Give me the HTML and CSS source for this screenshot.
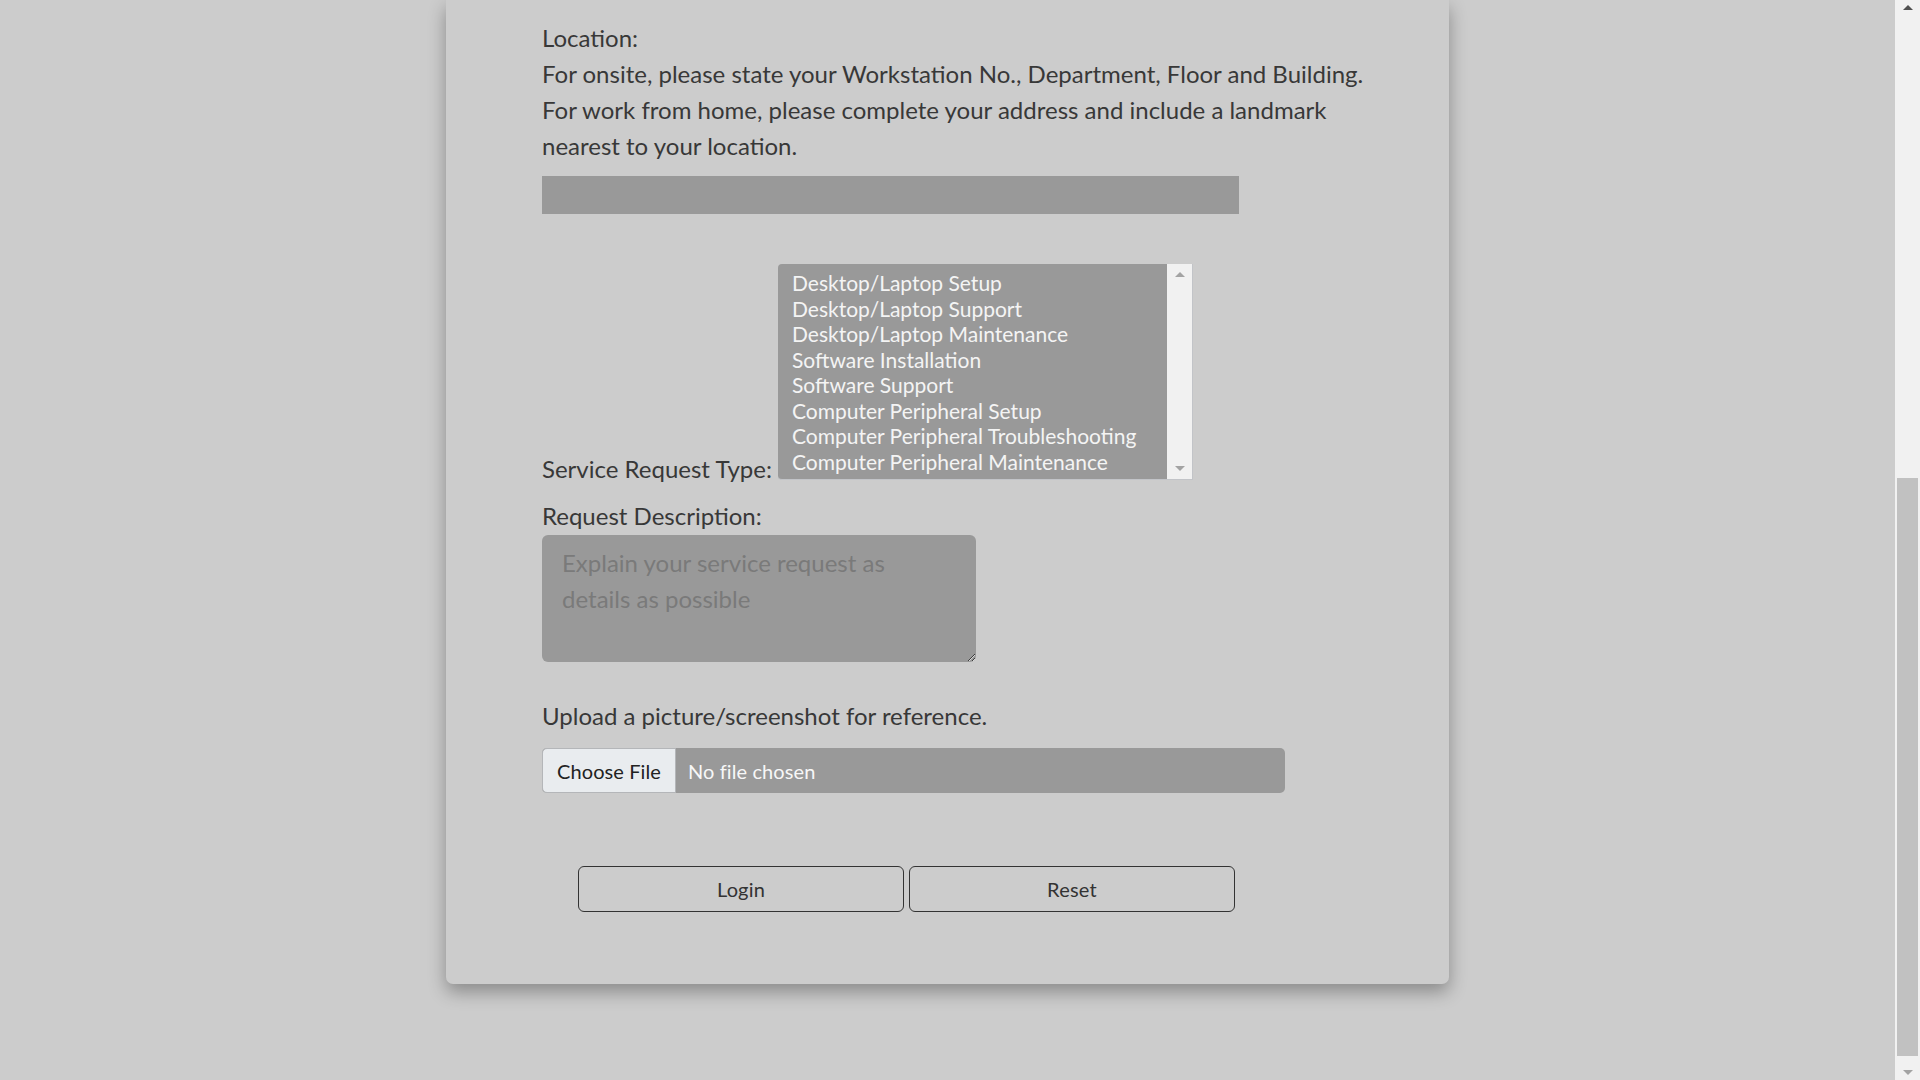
FILE: index.html
```html
<!DOCTYPE html>
<html lang="en">
<head>
<meta charset="utf-8">
<title>Service Request</title>
<link rel="stylesheet" href="styles.css">
</head>
<body>
<div class="screen">
  <main class="stage">
    <form class="card">
      <div class="loc-text">
        <div>Location:</div>
        <div>For onsite, please state your Workstation No., Department, Floor and Building.</div>
        <div>For work from home, please complete your address and include a landmark nearest to your location.</div>
      </div>
      <input class="loc-input" type="text">

      <div class="type-row">
        <span class="type-label">Service Request Type:</span>
        <div class="listbox">
          <div class="options">
            <div class="opt">Desktop/Laptop Setup</div>
            <div class="opt">Desktop/Laptop Support</div>
            <div class="opt">Desktop/Laptop Maintenance</div>
            <div class="opt">Software Installation</div>
            <div class="opt">Software Support</div>
            <div class="opt">Computer Peripheral Setup</div>
            <div class="opt">Computer Peripheral Troubleshooting</div>
            <div class="opt">Computer Peripheral Maintenance</div>
          </div>
          <div class="lb-scroll">
            <span class="arrow up dim"></span>
            <span class="arrow down dim"></span>
          </div>
        </div>
      </div>

      <div class="desc-label">Request Description:</div>
      <textarea class="desc" placeholder="Explain your service request as details as possible"></textarea>

      <div class="upload-label">Upload a picture/screenshot for reference.</div>
      <div class="file">
        <span class="file-btn">Choose File</span>
        <span class="file-name">No file chosen</span>
      </div>

      <div class="actions">
        <button type="button" class="btn">Login</button>
        <button type="button" class="btn">Reset</button>
      </div>
    </form>
  </main>
  <div class="vscroll">
    <span class="arrow up"></span>
    <div class="vtrack"><div class="vthumb"></div></div>
    <span class="arrow down dim"></span>
  </div>
</div>
</body>
</html>
```
FILE: styles.css
```css
* { box-sizing: border-box; }
html, body { margin: 0; padding: 0; }
body {
  background: #cccccc;
  font-family: Lato, "Open Sans", sans-serif;
  color: #383838;
  overflow: hidden;
}
.screen {
  display: flex;
  height: 1080px;
}
.stage {
  flex: 1;
  display: flex;
  justify-content: center;
  align-items: flex-start;
  overflow: hidden;
}
.card {
  width: 1003px;
  background: #cccccc;
  border-radius: 0 0 7px 7px;
  box-shadow: 0 8px 18px rgba(0, 0, 0, 0.32);
  padding: 20px 60px 72px 96px;
  display: flex;
  flex-direction: column;
  align-items: flex-start;
  font-size: 24px;
  line-height: 36px;
}
.loc-text { width: 847px; }
.loc-input {
  margin-top: 12px;
  width: 697px;
  height: 38px;
  background: #999999;
  border: none;
  outline: none;
}
.type-row {
  margin-top: 50px;
  display: flex;
  align-items: flex-end;
}
.type-label {
  margin-bottom: -7px;
  margin-right: 6px;
}
.listbox {
  width: 415px;
  height: 216px;
  display: flex;
  background: #999999;
  border-radius: 4px 0 0 4px;
  border-right: 1px solid #c2c4c8;
  border-bottom: 1px solid #c2c4c8;
}
.options {
  flex: 1;
  padding: 6px 0 0 14px;
  color: #f4f4f4;
  font-size: 21px;
  line-height: 25.5px;
}
.opt { white-space: nowrap; }
.lb-scroll {
  width: 25px;
  background: #f1f1f1;
  display: flex;
  flex-direction: column;
  justify-content: space-between;
  align-items: center;
  padding: 8px 0 8px;
}
.arrow {
  width: 0;
  height: 0;
  border-left: 5px solid transparent;
  border-right: 5px solid transparent;
}
.arrow.up { border-bottom: 5px solid #505050; }
.arrow.down { border-top: 5px solid #505050; }
.arrow.up.dim { border-bottom-color: #a3a3a3; }
.arrow.down.dim { border-top-color: #a3a3a3; }
.desc-label { margin-top: 18px; }
.desc {
  margin-top: 1px;
  width: 434px;
  height: 127px;
  background: #999999;
  border: none;
  border-radius: 6px;
  padding: 10px 20px;
  font-family: inherit;
  font-size: 24px;
  line-height: 36px;
  color: #333;
  outline: none;
  resize: both;
}
.desc::placeholder { color: #7a7a7a; }
.upload-label { margin-top: 36px; }
.file {
  margin-top: 14px;
  width: 743px;
  height: 45px;
  background: #999999;
  border-radius: 5px;
  display: flex;
  align-items: stretch;
  font-size: 20px;
  letter-spacing: 0.1px;
}
.file-btn {
  width: 134px;
  background: #e9ecef;
  border: 1px solid #b4b6b9;
  border-radius: 5px 0 0 5px;
  display: flex;
  align-items: center;
  justify-content: center;
  color: #222;
}
.file-name {
  display: flex;
  align-items: center;
  padding-left: 12px;
  color: #f7f7f7;
}
.actions {
  margin-top: 73px;
  margin-left: 36px;
  display: flex;
  gap: 5px;
}
.btn {
  width: 326px;
  height: 46px;
  background: transparent;
  border: 1.5px solid #333;
  border-radius: 6px;
  font-family: inherit;
  font-size: 20px;
  letter-spacing: 0.2px;
  color: #333;
}
.vscroll {
  width: 25px;
  background: #f1f1f1;
  display: flex;
  flex-direction: column;
  align-items: center;
  padding: 5px 0 5px;
}
.vtrack {
  flex: 1;
  width: 100%;
  display: flex;
  flex-direction: column;
  justify-content: flex-end;
  padding: 8px 2px 14px;
}
.vthumb {
  height: 578px;
  background: #c1c1c1;
}
```
